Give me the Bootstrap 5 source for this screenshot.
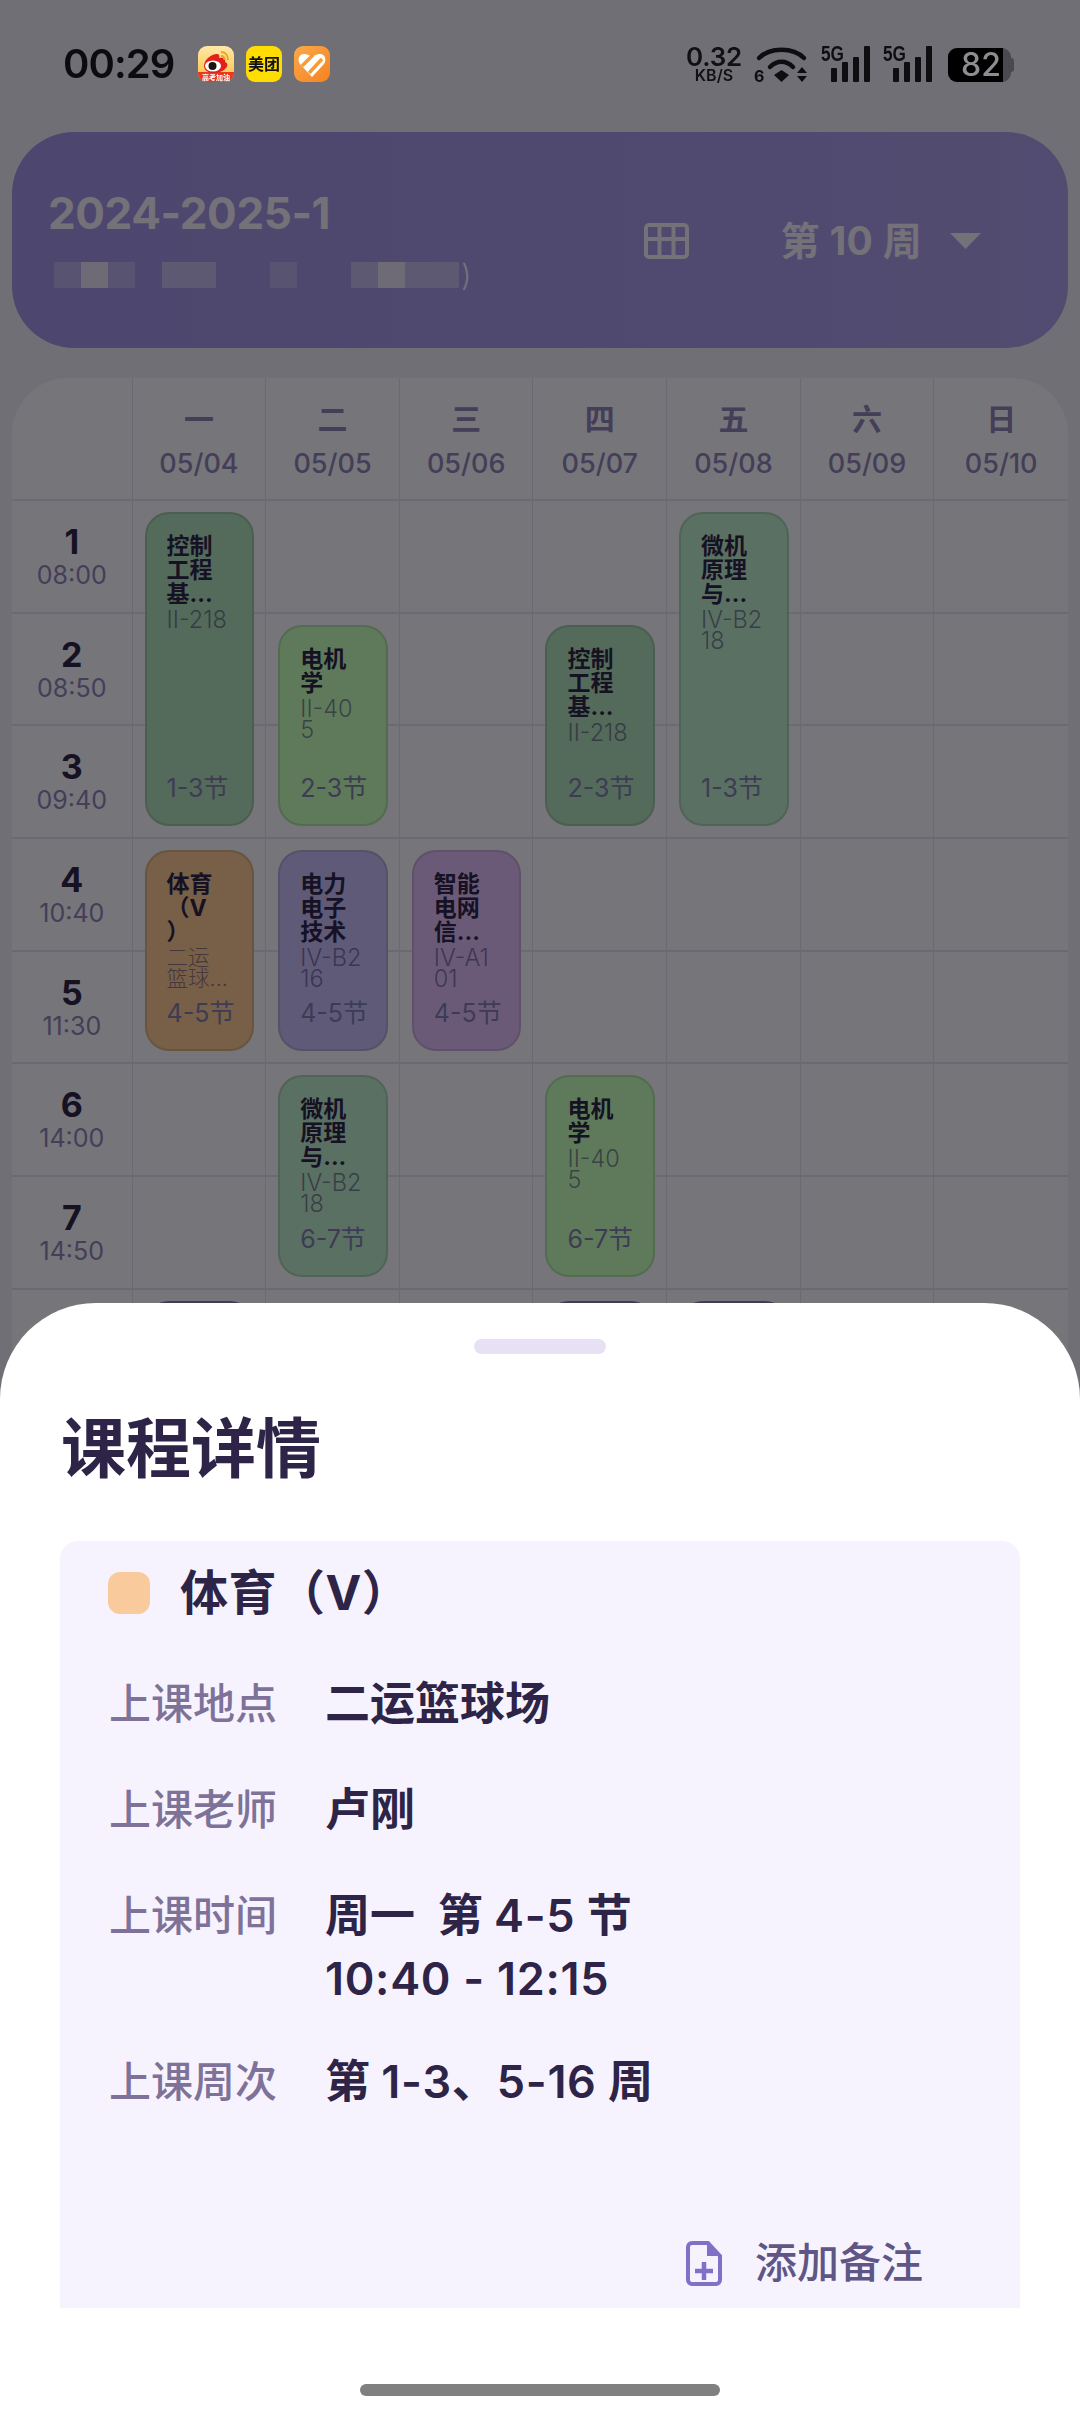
<!DOCTYPE html>
<html lang="zh-CN">
<head>
  <meta charset="UTF-8" />
  <title>课程详情</title>
  <link href="https://cdn.jsdelivr.net/npm/bootstrap@5.3.3/dist/css/bootstrap.min.css" rel="stylesheet" />
  <style>
    html, body {
      width: 1080px;
      height: 2414px;
      margin: 0;
      overflow: hidden;
      background: #e2deec;
      font-family: Inter, "Noto Sans CJK SC", sans-serif;
      color: #2d2447;
    }
    /* status bar sits above the backdrop, its colours are not dimmed */
    .status-row {
      position: relative;
      z-index: 1060;
      height: 132px;
      padding: 46px 66px 0 63px;
    }
    .clock { font-size: 40px; line-height: 36px; font-weight: 600; color: #0c0c0e; letter-spacing: -.9px; }
    .app-ico { width: 36px; height: 36px; display: block; }
    .app-row { margin-left: 23px; gap: 12px; }
    .sys-row svg { overflow: visible; display: block; }
    .speed { width: 56px; color: #111; text-align: center; font-weight: 600; white-space: nowrap; }
    .speed-num { font-size: 26px; line-height: 22px; letter-spacing: -.2px; }
    .speed-unit { font-size: 16px; line-height: 14px; }
    .gap-wifi { margin-left: 12px; }
    .gap-sig { margin-left: 13px; }
    .batt { position: relative; width: 66px; height: 34px; margin: 2px 0 0 16px; }
    .batt-track { position: absolute; left: 0; top: 0; width: 63px; height: 34px; border-radius: 9px; background: #4b4850; }
    .batt-nub { position: absolute; left: 63px; top: 10px; width: 3px; height: 14px; border-radius: 0 3px 3px 0; background: #4b4850; }
    .batt-fill { position: absolute; left: 0; top: 0; width: 55px; height: 34px; border-radius: 9px 0 0 9px; background: #000; }
    .batt-num { position: absolute; left: 13px; top: 0; font-size: 32px; line-height: 34px; font-weight: 500; color: #8e8c90; }

    .term-bar {
      height: 216px;
      margin: 0 12px;
      padding: 56px 87px 0 36px;
      border-radius: 62px;
      background: linear-gradient(90deg, #9a8cdc, #a498e2);
      color: #e8e2f0;
    }
    .term-name { font-size: 44px; line-height: 50px; font-weight: 700; letter-spacing: -.4px; }
    .mosaic { margin: 24px 0 0 6px; height: 26px; }
    .mos { width: 27px; height: 26px; }
    .mos-a { background: #b0a6e2; }
    .mos-b { background: #dcd6ee; }
    .mos-c { background: #bcb2e6; }
    .mos-d { background: transparent; }
    .mos-paren { font-size: 30px; line-height: 26px; font-weight: 300; margin-left: 2px; }
    .week-pick { margin-top: 35px; gap: 28px; }
    .week-text { font-size: 39px; line-height: 36px; font-weight: 700; margin-left: 64px; white-space: nowrap; letter-spacing: .3px; }

    .tt-grid {
      display: grid;
      grid-template-columns: 120.6px repeat(7, 1fr);
      grid-template-rows: 123px repeat(9, 112.7px);
      margin: 30px 12px 0;
      border-radius: 56px 56px 0 0;
      background: #ecebf2;
      overflow: hidden;
    }
    .tt-cell { border-right: 1px solid #d6d2e4; border-bottom: 2px solid #d6d2e4; }
    .tt-end { border-right: 0; }
    .day-head { text-align: center; padding-top: 23px; color: #887cb2; }
    .day-name { font-size: 30px; line-height: 36px; font-weight: 700; }
    .day-date { font-size: 27px; line-height: 32px; font-weight: 500; margin-top: 11px; }
    .sec-head { text-align: center; padding-top: 23px; }
    .sec-num { font-size: 34px; line-height: 36px; font-weight: 700; }
    .sec-time { font-size: 25px; line-height: 31px; color: #887cb2; }

    .course {
      margin: 11px 12px 13px;
      padding: 20px 10px 21px 20px;
      border: 2px solid rgba(60, 70, 60, .16);
      border-radius: 24px;
      min-width: 0;
    }
    .course-title { font-size: 23px; line-height: 24px; font-weight: 700; color: #2d2447; white-space: pre-line; }
    .course-room { font-size: 23.5px; line-height: 21px; font-weight: 300; margin-top: 3px; color: rgba(70, 60, 110, .62); white-space: pre-line; }
    .course-secs { font-size: 25px; line-height: 30px; color: #7c78aa; white-space: nowrap; }
    .c-sage { background: #a8d4b6; }
    .c-mint { background: #b4e0c4; }
    .c-lime { background: #bcf4b4; }
    .c-orange { background: #eebe90; }
    .c-orange .course-room { font-size: 21.5px; }
    .c-blue { background: #beb4f0; }
    .c-violet { background: #d4b4f0; }
    .c-dark { background: #8f80c8; }

    /* bottom sheet over the backdrop */
    .sheet {
      position: absolute;
      left: 0;
      top: 1303px;
      z-index: 1060;
      width: 1080px;
      height: 1111px;
      padding: 36px 60px 0;
      background: #fff;
      border-radius: 96px 96px 0 0;
    }
    .grab { width: 132px; height: 15px; border-radius: 8px; background: #e8e1f6; }
    .sheet-title { font-size: 65px; line-height: 80px; font-weight: 700; margin: 55px 0 52px 1px; color: #2d2447; }
    .detail-box {
      height: 767px;
      padding: 22px 99px 20px 48px;
      background: #f6f3fe;
      border-radius: 18px 18px 0 0;
    }
    .swatch { width: 42px; height: 42px; border-radius: 12px; background: #f9cb9c; }
    .detail-name { font-size: 48px; line-height: 60px; font-weight: 700; margin-left: 30px; letter-spacing: .5px; }
    .detail-rows { margin-top: 49px; }
    .detail-row { display: flex; margin-top: 43px; font-size: 45px; line-height: 63px; }
    .detail-row:first-child { margin-top: 0; }
    .detail-row:last-child { margin-top: 40px; }
    .detail-label { width: 217px; padding-left: 1px; font-size: 42px; font-weight: 500; color: #7f7299; flex: none; }
    .detail-val { font-weight: 600; color: #2d2447; }
    .wide-num { letter-spacing: .7px; }
    .note-add { gap: 33px; color: #5f5685; font-size: 42px; line-height: 50px; font-weight: 500; margin-right: -2px; }
    .home-pill { width: 360px; height: 12px; margin-top: 76px; border-radius: 6px; background: #808080; }
  </style>
</head>
<body>
  <div class="status-row d-flex justify-content-between">
    <div class="d-flex align-items-start">
      <div class="clock">00:29</div>
      <div class="app-row d-flex">
        <svg class="app-ico" viewBox="0 0 36 36">
          <defs><linearGradient id="wbg" x1="0" y1="0" x2="0" y2="1"><stop offset="0" stop-color="#ffe9a8"/><stop offset="1" stop-color="#fbbf3a"/></linearGradient></defs>
          <rect width="36" height="36" rx="9" fill="url(#wbg)"/>
          <path d="M0 26h36v1a9 9 0 0 1-9 9H9a9 9 0 0 1-9-9z" fill="#e8391f"/>
          <path d="M6 20c0-6 7-12 13-12 2 0 3 2 2 4 4-1 7 1 6 4 3 1 3 4 1 6-3 4-9 5-13 5-5 0-9-3-9-7z" fill="#e0211b"/>
          <ellipse cx="15" cy="20" rx="8" ry="5.6" fill="#fff"/>
          <circle cx="14.5" cy="20" r="4" fill="#1a1414"/>
          <path d="M23 6c4 0 7 3 7 8M23 10c2 0 3.500 1.500 3.500 4" fill="none" stroke="#f3a31f" stroke-width="2"/>
          <text x="18" y="34" text-anchor="middle" font-size="7" font-weight="700" fill="#fff" font-family="'Noto Sans CJK SC', sans-serif">高考加油</text>
        </svg>
        <svg class="app-ico" viewBox="0 0 36 36">
          <rect width="36" height="36" rx="9" fill="#ffdd00"/>
          <text x="18" y="24" text-anchor="middle" font-size="16" font-weight="700" fill="#111" font-family="'Noto Sans CJK SC', sans-serif">美团</text>
        </svg>
        <svg class="app-ico" viewBox="0 0 36 36">
          <defs><linearGradient id="hbg" x1="0" y1="0" x2="1" y2="1"><stop offset="0" stop-color="#fba94a"/><stop offset="1" stop-color="#f58220"/></linearGradient></defs>
          <rect width="36" height="36" rx="9" fill="url(#hbg)"/>
          <path d="M18 31 6 18c-3-4-1-10 4-10 3 0 6 1 8 4 2-3 5-4 8-4 5 0 7 6 4 10z" fill="#fff"/>
          <path d="M8 20 19 9M15 27 28 13" stroke="#f99a35" stroke-width="3.500" fill="none"/>
        </svg>
      </div>
    </div>
    <div class="sys-row d-flex align-items-start">
      <div class="speed">
        <div class="speed-num">0.32</div>
        <div class="speed-unit">KB/S</div>
      </div>
      <svg width="54" height="36" viewBox="0 0 54 36" class="gap-wifi">
        <g fill="none" stroke="#0e0e10" stroke-width="4.500" stroke-linecap="round">
          <path d="M5 12C16 1 39 1 50 12"/>
          <path d="M16 21C23 14 32 14 39 21"/>
        </g>
        <path d="M20 29l7.500-5 7.500 5-7.500 7z" fill="#0e0e10"/>
        <text x="0" y="36" font-size="16" font-weight="700" fill="#0e0e10" font-family="Inter, sans-serif">6</text>
        <path d="M43 27l5-6 5 6zM43 30l5 6 5-6z" fill="#0e0e10"/>
      </svg>
      <svg width="49" height="36" viewBox="0 0 49 36" class="gap-sig">
        <text x="0" y="15" font-size="22" font-weight="700" fill="#0e0e10" font-family="'Liberation Sans', sans-serif" textLength="23" lengthAdjust="spacingAndGlyphs">5G</text>
        <g fill="#0e0e10"><rect x="10" y="22" width="6" height="14" rx="1"/><rect x="21" y="16" width="6" height="20" rx="1"/><rect x="32" y="11" width="6" height="25" rx="1"/><rect x="43" y="0" width="6" height="36" rx="1"/></g>
      </svg>
      <svg width="49" height="36" viewBox="0 0 49 36" class="gap-sig">
        <text x="0" y="15" font-size="22" font-weight="700" fill="#0e0e10" font-family="'Liberation Sans', sans-serif" textLength="23" lengthAdjust="spacingAndGlyphs">5G</text>
        <g fill="#0e0e10"><rect x="10" y="22" width="6" height="14" rx="1"/><rect x="21" y="16" width="6" height="20" rx="1"/><rect x="32" y="11" width="6" height="25" rx="1"/><rect x="43" y="0" width="6" height="36" rx="1"/></g>
      </svg>
      <div class="batt">
        <div class="batt-track"></div>
        <div class="batt-nub"></div>
        <div class="batt-fill"></div>
        <div class="batt-num">82</div>
      </div>
    </div>
  </div>

  <div class="term-bar d-flex justify-content-between align-items-start">
    <div>
      <div class="term-name">2024-2025-1</div>
      <div class="mosaic d-flex align-items-center">
        <div class="mos mos-a"></div><div class="mos mos-b"></div><div class="mos mos-a"></div><div class="mos mos-d"></div>
        <div class="mos mos-c"></div><div class="mos mos-c"></div><div class="mos mos-d"></div><div class="mos mos-d"></div>
        <div class="mos mos-a"></div><div class="mos mos-d"></div><div class="mos mos-d"></div><div class="mos mos-c"></div>
        <div class="mos mos-b"></div><div class="mos mos-c"></div><div class="mos mos-c"></div>
        <span class="mos-paren">)</span>
      </div>
    </div>
    <div class="week-pick d-flex align-items-center">
      <svg width="45" height="36" viewBox="0 0 45 36" fill="none" stroke="#e8e2f0" stroke-width="4">
        <rect x="2" y="2" width="41" height="32" rx="3"/>
        <path d="M15.500 2v32M29.500 2v32M2 16h41"/>
      </svg>
      <div class="week-text">第 10 周</div>
      <svg width="31" height="16" viewBox="0 0 31 16"><path d="M0 0h31L15.500 16z" fill="#e8e2f0"/></svg>
    </div>
  </div>

  <div id="grid" class="tt-grid"></div>

  <div class="modal-backdrop show"></div>

  <div class="sheet">
    <div class="grab mx-auto"></div>
    <h1 class="sheet-title">课程详情</h1>
    <div class="detail-box d-flex flex-column">
      <div class="d-flex align-items-center">
        <div class="swatch"></div>
        <div class="detail-name">体育（V）</div>
      </div>
      <div class="detail-rows">
        <div class="detail-row"><div class="detail-label">上课地点</div><div class="detail-val">二运篮球场</div></div>
        <div class="detail-row"><div class="detail-label">上课老师</div><div class="detail-val">卢刚</div></div>
        <div class="detail-row"><div class="detail-label">上课时间</div><div class="detail-val">周一&nbsp;&nbsp;第 <span class="wide-num">4-5</span> 节<br><span class="wide-num">10:40 - 12:15</span></div></div>
        <div class="detail-row"><div class="detail-label">上课周次</div><div class="detail-val">第 <span class="wide-num">1-3</span>、<span class="wide-num">5-16</span> 周</div></div>
      </div>
      <div class="note-add d-flex align-items-center justify-content-end mt-auto">
        <svg width="36" height="45" viewBox="0 0 36 45" fill="none">
          <path d="M6 2h16l12 13v24a4 4 0 0 1-4 4H6a4 4 0 0 1-4-4V6a4 4 0 0 1 4-4z" stroke="#8070c8" stroke-width="4"/>
          <path d="M21 2l13 13H21z" fill="#8070c8"/>
          <path d="M18 21v18M9 30h18" stroke="#8070c8" stroke-width="4.500"/>
        </svg>
        <span>添加备注</span>
      </div>
    </div>
    <div class="home-pill mx-auto"></div>
  </div>

<script>
  const grid = document.getElementById('grid');
  const days = [['一','05/04'],['二','05/05'],['三','05/06'],['四','05/07'],['五','05/08'],['六','05/09'],['日','05/10']];
  const secs = ['08:00','08:50','09:40','10:40','11:30','14:00','14:50','15:50','16:40'];
  const courses = [
    { day: 1, from: 1, to: 3, cls: 'c-sage', title: '控制\n工程\n基...', room: 'II-218', label: '1-3节' },
    { day: 2, from: 2, to: 3, cls: 'c-lime', title: '电机\n学', room: 'II-40\n5', label: '2-3节' },
    { day: 4, from: 2, to: 3, cls: 'c-sage', title: '控制\n工程\n基...', room: 'II-218', label: '2-3节' },
    { day: 5, from: 1, to: 3, cls: 'c-mint', title: '微机\n原理\n与...', room: 'IV-B2\n18', label: '1-3节' },
    { day: 1, from: 4, to: 5, cls: 'c-orange', title: '体育\n（V\n）', room: '二运\n篮球...', label: '4-5节' },
    { day: 2, from: 4, to: 5, cls: 'c-blue', title: '电力\n电子\n技术', room: 'IV-B2\n16', label: '4-5节' },
    { day: 3, from: 4, to: 5, cls: 'c-violet', title: '智能\n电网\n信...', room: 'IV-A1\n01', label: '4-5节' },
    { day: 2, from: 6, to: 7, cls: 'c-mint', title: '微机\n原理\n与...', room: 'IV-B2\n18', label: '6-7节' },
    { day: 4, from: 6, to: 7, cls: 'c-lime', title: '电机\n学', room: 'II-40\n5', label: '6-7节' },
    { day: 1, from: 8, to: 9, cls: 'c-dark', title: '', room: '', label: '' },
    { day: 4, from: 8, to: 9, cls: 'c-dark', title: '', room: '', label: '' },
    { day: 5, from: 8, to: 9, cls: 'c-dark', title: '', room: '', label: '' }
  ];

  // every cell gets its own grid place, otherwise the courses push the cells around
  const cell = (col, row, cls, inner) =>
    `<div class="tt-cell ${col === 8 ? 'tt-end' : ''} ${cls}" style="grid-column:${col};grid-row:${row}">${inner}</div>`;

  let html = cell(1, 1, '', '');
  days.forEach((d, i) => {
    html += cell(i + 2, 1, 'day-head', `<div class="day-name">${d[0]}</div><div class="day-date">${d[1]}</div>`);
  });
  secs.forEach((t, r) => {
    html += cell(1, r + 2, 'sec-head', `<div class="sec-num">${r + 1}</div><div class="sec-time">${t}</div>`);
    for (let c = 2; c <= 8; c++) html += cell(c, r + 2, '', '');
  });
  courses.forEach(c => {
    html += `<div class="course ${c.cls} d-flex flex-column" style="grid-column:${c.day + 1};grid-row:${c.from + 1}/${c.to + 2}">
      <div class="course-title">${c.title}</div>
      <div class="course-room">${c.room}</div>
      <div class="course-secs mt-auto">${c.label}</div>
    </div>`;
  });
  grid.innerHTML = html;
</script>
<script src="https://cdn.jsdelivr.net/npm/bootstrap@5.3.3/dist/js/bootstrap.bundle.min.js"></script>
</body>
</html>
